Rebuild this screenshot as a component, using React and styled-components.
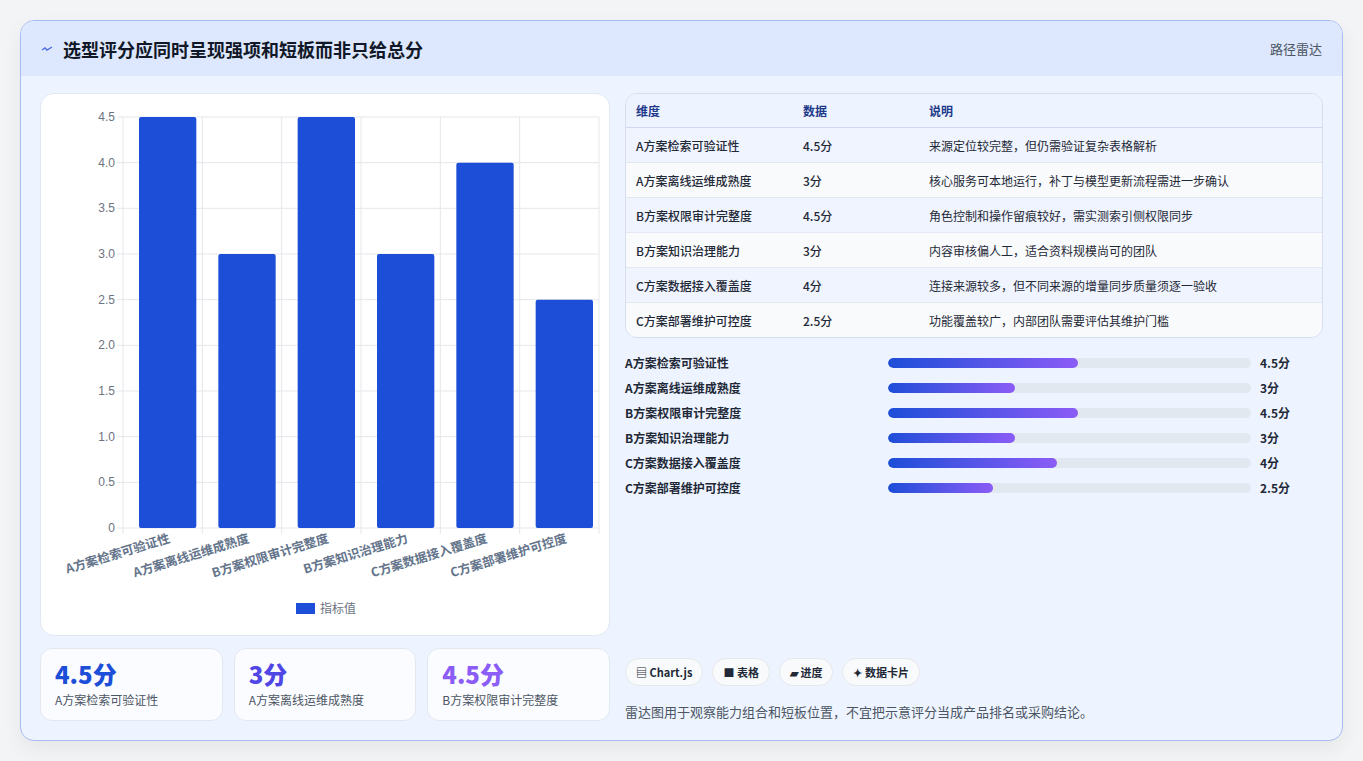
import React from "react";
import styled, { createGlobalStyle } from "styled-components";

const G = createGlobalStyle`
  body{margin:0;background:#f3f4f6;font-family:"Noto Sans CJK SC","Noto Sans",sans-serif;}
`;
const data = [
  ["A方案检索可验证性", 4.5, "来源定位较完整，但仍需验证复杂表格解析"],
  ["A方案离线运维成熟度", 3, "核心服务可本地运行，补丁与模型更新流程需进一步确认"],
  ["B方案权限审计完整度", 4.5, "角色控制和操作留痕较好，需实测索引侧权限同步"],
  ["B方案知识治理能力", 3, "内容审核偏人工，适合资料规模尚可的团队"],
  ["C方案数据接入覆盖度", 4, "连接来源较多，但不同来源的增量同步质量须逐一验收"],
  ["C方案部署维护可控度", 2.5, "功能覆盖较广，内部团队需要评估其维护门槛"],
];
const Page = styled.div`padding:20px;height:761px;box-sizing:border-box;`;
const Card = styled.div`border:1px solid #a9bcf0;border-radius:14px;overflow:hidden;background:#eef4ff;height:721px;box-sizing:border-box;box-shadow:0 8px 20px rgba(0,0,0,.06);display:flex;flex-direction:column;`;
const Header = styled.div`height:55px;background:#dde7fd;display:flex;align-items:center;justify-content:space-between;padding:0 20px;`;
const Title = styled.h1`margin:0;font-size:18px;font-weight:700;color:#111827;display:flex;align-items:center;gap:10px;`;
const Tag = styled.span`font-size:13px;color:#4b5563;`;
const Body = styled.div`flex:1;display:grid;grid-template-columns:570px 1fr;gap:15px;padding:17px 19px 19px 19px;`;
const Col = styled.div`display:flex;flex-direction:column;gap:12px;min-height:0;`;
const ChartBox = styled.div`background:#fff;border:1px solid #e2e8f0;border-radius:14px;height:543px;box-sizing:border-box;`;
const Stats = styled.div`display:grid;grid-template-columns:repeat(3,1fr);gap:11px;`;
const Stat = styled.div`background:#fbfcff;border:1px solid #e2e8f0;border-radius:12px;height:73px;box-sizing:border-box;padding:10px 14px;`;
const Big = styled.div`font-size:24px;font-weight:800;color:${p=>p.c};line-height:30px;`;
const Small = styled.div`font-size:12px;color:#4b5563;margin-top:2px;`;
const Table = styled.table`width:100%;border-collapse:collapse;border:1px solid #d6deef;border-radius:12px;overflow:hidden;border-style:hidden;box-shadow:0 0 0 1px #d6deef;font-size:12px;color:#1f2937;`;
const TW = styled.div`border-radius:12px;overflow:hidden;border:1px solid #d6deef;`;
const Th = styled.th`text-align:left;font-weight:600;color:#1e3a8a;height:33px;padding:0 10px;background:#eef4ff;border-bottom:1px solid #cfd9ee;`;
const Tr = styled.tr`background:${p=>p.odd?"#f8fafc":"#eff4fe"};`;
const Td = styled.td`height:34px;padding:0 10px;border-top:1px solid #e3e8f2;font-weight:${p=>p.b?500:400};`;
const Bars = styled.div`display:flex;flex-direction:column;gap:9px;margin-top:-2px;`;
const BarRow = styled.div`display:grid;grid-template-columns:263px 363px 1fr;gap:0;align-items:center;height:16px;font-size:12px;font-weight:600;color:#1f2937;`;
const Track = styled.div`height:10px;border-radius:5px;background:#e2e8f0;overflow:hidden;`;
const Fill = styled.div`height:100%;border-radius:5px;background:linear-gradient(90deg,#1d4ed8,#8b5cf6);`;
const Val = styled.span`padding-left:9px;`;
const Spacer = styled.div`flex:1;`;
const Chips = styled.div`display:flex;gap:9px;`;
const Chip = styled.span`background:#f8fafc;border:1px solid #e5e7eb;border-radius:14px;height:26px;padding:0 10px;display:flex;align-items:center;font-size:11px;font-weight:600;color:#1f2937;gap:4px;`;
const Note = styled.div`font-size:13px;color:#4b5563;margin-top:-2px;`;

function Chart(){
  const x0=82,x1=558,y0=434,yt=23;
  const sc=v=>y0-(v/4.5)*(y0-yt);
  const w=(x1-x0)/6;
  const ticks=[0,0.5,1,1.5,2,2.5,3,3.5,4,4.5];
  return (
    <svg width="570" height="543" style={{display:"block"}}>
      {ticks.map(t=>(<g key={t}><line x1={x0-6} x2={x1} y1={sc(t)} y2={sc(t)} stroke="#e5e7eb"/>
        <text x={x0-8} y={sc(t)+4} textAnchor="end" fontSize="12" fill="#6b7280" fontFamily="Liberation Sans">{t===0?"0":t.toFixed(1)}</text></g>))}
      {[0,1,2,3,4,5,6].map(i=><line key={i} x1={x0+i*w} x2={x0+i*w} y1={yt} y2={y0+6} stroke="#e5e7eb"/>)}
      {data.map((d,i)=>(<g key={i}>
        <rect x={x0+i*w+16} y={sc(d[1])} width={w-22} height={y0-sc(d[1])} fill="#1d4ed8" rx="2"/>
        <text transform={`translate(${x0+i*w+w/2+8},${y0+14}) rotate(-17)`} textAnchor="end" fontSize="12.5" fontWeight="600" fill="#64748b">{d[0]}</text>
      </g>))}
      <rect x="255" y="509" width="19" height="11" fill="#1d4ed8"/>
      <text x="279" y="519" fontSize="12" fill="#6b7280">指标值</text>
    </svg>
  );
}

export default function App(){
  const cols=["#1d4ed8","#4f46e5","#8b5cf6"];
  return (<Page><G/><Card>
    <Header><Title><svg width="12" height="10" viewBox="0 0 12 10"><path d="M1 6 L4 4 L6 6 L11 3" stroke="#4f6fe0" strokeWidth="1.4" fill="none"/></svg>选型评分应同时呈现强项和短板而非只给总分</Title><Tag>路径雷达</Tag></Header>
    <Body>
      <Col>
        <ChartBox><Chart/></ChartBox>
        <Stats>{data.slice(0,3).map((d,i)=><Stat key={i}><Big c={cols[i]}>{d[1]}分</Big><Small>{d[0]}</Small></Stat>)}</Stats>
      </Col>
      <Col style={{gap:"18px"}}>
        <TW><table style={{width:"100%",borderCollapse:"collapse",fontSize:"12px",color:"#1f2937"}}>
          <thead><tr><Th style={{width:"147px"}}>维度</Th><Th style={{width:"106px"}}>数据</Th><Th>说明</Th></tr></thead>
          <tbody>{data.map((d,i)=><Tr key={i} odd={i%2===1}><Td b>{d[0]}</Td><Td b>{d[1]}分</Td><Td>{d[2]}</Td></Tr>)}</tbody>
        </table></TW>
        <Bars>{data.map((d,i)=><BarRow key={i}><span>{d[0]}</span><Track><Fill style={{width:`${d[1]/4.5*52.3}%`}}/></Track><Val>{d[1]}分</Val></BarRow>)}</Bars>
        <Spacer/>
        <div style={{display:"flex",flexDirection:"column",gap:"18px"}}>
          <Chips><Chip>▤ Chart.js</Chip><Chip>■ 表格</Chip><Chip>▰ 进度</Chip><Chip>✦ 数据卡片</Chip></Chips>
          <Note>雷达图用于观察能力组合和短板位置，不宜把示意评分当成产品排名或采购结论。</Note>
        </div>
      </Col>
    </Body>
  </Card></Page>);
}
